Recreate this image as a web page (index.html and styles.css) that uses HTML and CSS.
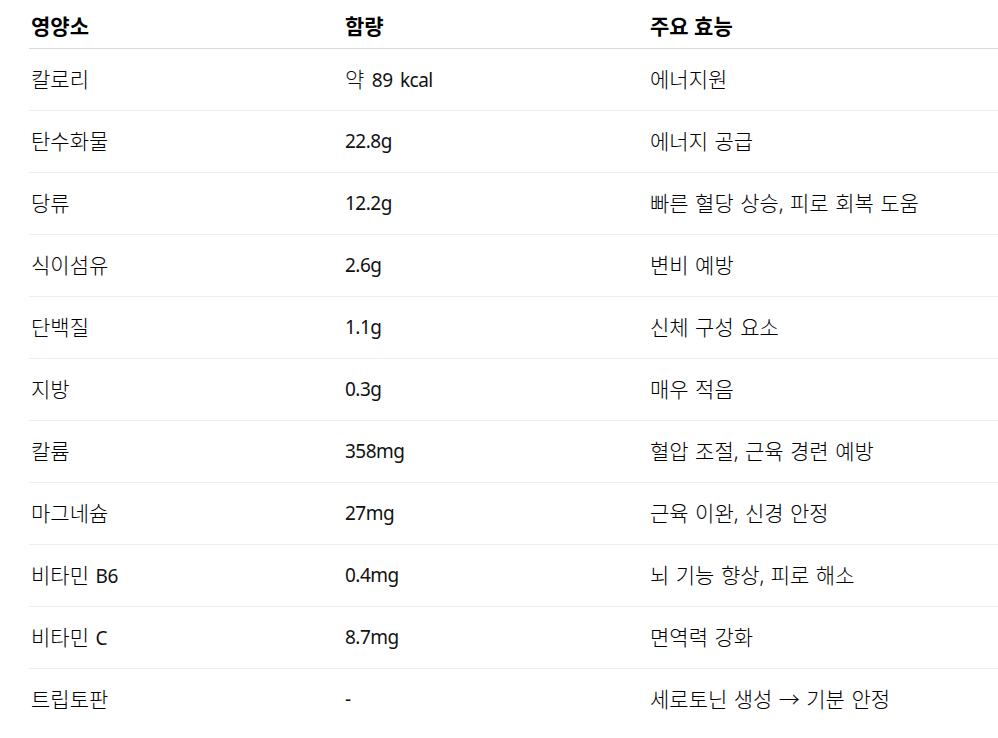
FILE: index.html
```html
<!DOCTYPE html>
<html lang="ko">
<head>
<meta charset="utf-8">
<title>영양소 표</title>
<link rel="stylesheet" href="styles.css">
</head>
<body>
<div class="wrap">
<table class="nutri">
<colgroup><col class="c1"><col class="c2"><col class="c3"></colgroup>
<thead>
<tr><th>영양소</th><th>함량</th><th>주요 효능</th></tr>
</thead>
<tbody>
<tr><td>칼로리</td><td class="num"><span class="ko">약</span> 89 kcal</td><td>에너지원</td></tr>
<tr><td>탄수화물</td><td class="num">22.8g</td><td>에너지 공급</td></tr>
<tr><td>당류</td><td class="num">12.2g</td><td>빠른 혈당 상승, 피로 회복 도움</td></tr>
<tr><td>식이섬유</td><td class="num">2.6g</td><td>변비 예방</td></tr>
<tr><td>단백질</td><td class="num">1.1g</td><td>신체 구성 요소</td></tr>
<tr><td>지방</td><td class="num">0.3g</td><td>매우 적음</td></tr>
<tr><td>칼륨</td><td class="num">358mg</td><td>혈압 조절, 근육 경련 예방</td></tr>
<tr><td>마그네슘</td><td class="num">27mg</td><td>근육 이완, 신경 안정</td></tr>
<tr><td>비타민 <span class="lat">B6</span></td><td class="num">0.4mg</td><td>뇌 기능 향상, 피로 해소</td></tr>
<tr><td>비타민 <span class="lat">C</span></td><td class="num">8.7mg</td><td>면역력 강화</td></tr>
<tr><td>트립토판</td><td class="num">-</td><td>세로토닌 생성 → 기분 안정</td></tr>
</tbody>
</table>
</div>
</body>
</html>
```
FILE: styles.css
```css
html, body {
  margin: 0;
  padding: 0;
  overflow: hidden;
  background: #fff;
}
body {
  font-family: "Noto Sans", "Noto Sans CJK KR", sans-serif;
  color: #000;
}
.wrap {
  padding-left: 29px;
}
.nutri {
  border-collapse: collapse;
  width: 1000px;
  table-layout: fixed;
  font-size: 21px;
}
.c1 { width: 314px; }
.c2 { width: 305px; }
.nutri th {
  text-align: left;
  font-weight: 700;
  height: 48px;
  padding: 5px 2px 0 2px;
  line-height: 26px;
  border-bottom: 1px solid #d9d9d9;
  box-sizing: border-box;
}
.nutri td {
  height: 62px;
  padding: 0 2px;
  line-height: 26px;
  vertical-align: middle;
  border-bottom: 1px solid #eeeeee;
  box-sizing: border-box;
  word-spacing: 1px;
  font-weight: 300;
}
.nutri td.num {
  font-size: 19px;
  letter-spacing: -0.5px;
  word-spacing: 3px;
  font-weight: 400;
  color: #111;
}
.nutri .ko {
  font-size: 21px;
  font-weight: 300;
  letter-spacing: 0;
}
.nutri .lat {
  font-size: 19px;
  font-weight: 400;
  letter-spacing: -0.3px;
  color: #111;
}
.nutri tbody tr:last-child td {
  border-bottom: none;
}
```
